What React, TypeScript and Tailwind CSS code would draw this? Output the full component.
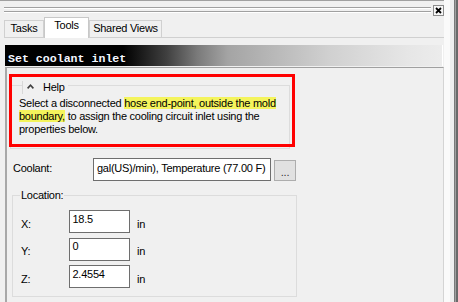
import React from "react";

function Row({ label, value }: { label: string; value: string }) {
  return (
    <div className="flex items-start ml-[8px]">
      <div className="w-[48px] mt-[7.5px]">{label}</div>
      <div className="w-[61px] h-[23px] border border-[#6e6e6e] bg-white pl-[2.5px] pt-[1.5px] whitespace-nowrap overflow-hidden">
        {value}
      </div>
      <div className="ml-[7px] mt-[7.5px]">in</div>
    </div>
  );
}

export default function App() {
  return (
    <div className="relative w-[458px] h-[302px] overflow-hidden bg-[#f0f0f0] flex font-['Liberation_Sans',Arial,sans-serif] text-[11px] leading-[13px] tracking-[-0.25px] text-black">
      <div className="w-[444px] flex flex-col">
        {/* gripper row */}
        <div className="h-[17px] shrink-0 border-t border-[#a0a0a0] flex items-start">
          <div className="ml-[4px] mt-[6px] w-[427px] shrink-0 flex flex-col">
            <div className="h-px bg-[#a0a0a0]" />
            <div className="h-px bg-white" />
            <div className="h-[2px]" />
            <div className="h-px bg-[#a0a0a0]" />
            <div className="h-px bg-white" />
          </div>
          <div className="ml-[2px] mt-[4px] w-[11px] h-[11px] shrink-0 border border-[#8c8c8c] bg-[#f6f6f6] flex items-center justify-center">
            <svg width="7" height="7" viewBox="0 0 7 7">
              <path d="M1 1 L6 6 M6 1 L1 6" stroke="#000" strokeWidth="1.8" />
            </svg>
          </div>
        </div>

        {/* tabs */}
        <div className="h-[21px] shrink-0 flex items-end pl-[4px]">
          <div className="w-[40px] h-[18px] border border-[#d0d0d0] flex justify-center pt-[1px]">Tasks</div>
          <div className="w-[45px] h-[21px] border border-b-0 border-[#c8c8c8] bg-white flex justify-center pt-[1px]">Tools</div>
          <div className="w-[73px] h-[18px] border border-[#d0d0d0] flex justify-center pt-[1px]">Shared Views</div>
          <div className="flex-1 border-b border-[#d0d0d0]" />
        </div>

        {/* title bar */}
        <div className="mt-[7px] ml-[5px] mr-[1px] h-[21px] shrink-0 border-r border-white bg-[linear-gradient(to_right,#000_0%,#000_27%,#404040_37%,#7a7a7a_44%,#a4a4a4_51%,#d0d0d0_74%,#e6e6e6_92%,#ececec_100%)] pl-[3px] pt-[8px]">
          <div className="font-['Liberation_Mono',monospace] font-bold text-[11.6px] leading-[12px] tracking-normal text-[#f4f6ff] whitespace-nowrap">
            Set coolant inlet
          </div>
        </div>

        {/* content panel */}
        <div className="mt-[1px] ml-[5px] flex-1 border-t border-[#a0a0a0] border-l-2 border-l-[#a8a8a8] border-r border-r-[#d4d4d4] flex flex-col items-start">
          {/* Help group */}
          <div className="ml-[3px] mt-[17px] w-[280px] h-[64px] border border-[#dcdcdc] flex flex-col items-start">
            <div className="-mt-[5px] ml-[11px] h-[13px] flex items-center bg-[#f0f0f0] border-l border-[#d8d8d8] pl-[4px] pr-[3px]">
              <svg width="7" height="5" viewBox="0 0 7 5" className="mb-[3px]">
                <polyline points="0.6,4.4 3.5,1.2 6.4,4.4" fill="none" stroke="#404040" strokeWidth="1.6" />
              </svg>
              <span className="ml-[9px]">Help</span>
            </div>
            <div className="ml-[8px] mt-[2.7px] leading-[13.3px] whitespace-nowrap">
              Select a disconnected <span className="bg-[#f4f45c]">hose end-point, outside the mold</span>
              <br />
              <span className="bg-[#f4f45c]">boundary,</span> to assign the cooling circuit inlet using the
              <br />
              properties below.
            </div>
          </div>

          {/* Coolant row */}
          <div className="mt-[9px] ml-[6px] flex items-start">
            <div className="w-[80px] mt-[3.5px]">Coolant:</div>
            <div className="w-[178px] h-[23px] border border-[#6e6e6e] bg-white pl-[3px] pt-[2.5px] whitespace-nowrap overflow-hidden">
              gal(US)/min), Temperature (77.00 F)
            </div>
            <div className="ml-[3px] mt-[2px] w-[22px] h-[21px] border border-[#adadad] bg-[#e1e1e1] flex items-center justify-center pt-[3px] text-[#333]">
              ...
            </div>
          </div>

          {/* Location group */}
          <div className="mt-[14px] ml-[5px] w-[285px] h-[102px] border border-[#dcdcdc] flex flex-col items-start">
            <div className="-mt-[7px] ml-[7px] px-[1px] bg-[#f0f0f0]">Location:</div>
            <div className="mt-[8px] flex flex-col gap-[4.5px]">
              <Row label="X:" value="18.5" />
              <Row label="Y:" value="0" />
              <Row label="Z:" value="2.4554" />
            </div>
          </div>
        </div>
      </div>

      {/* right edge strip */}
      <div className="w-[14px] flex">
        <div className="w-[6px] bg-[#fafafa]" />
        <div className="w-[4px] bg-[#efefef]" />
        <div className="w-px bg-[#7a7a7a]" />
        <div className="w-px bg-[#a0a0a0]" />
        <div className="w-[2px] bg-[#6a6a6a]" />
      </div>

      {/* red annotation overlay */}
      <div className="absolute left-[9px] top-[74px] w-[286px] h-[73px] border-[3px] border-[#ff0000] pointer-events-none" />
    </div>
  );
}
